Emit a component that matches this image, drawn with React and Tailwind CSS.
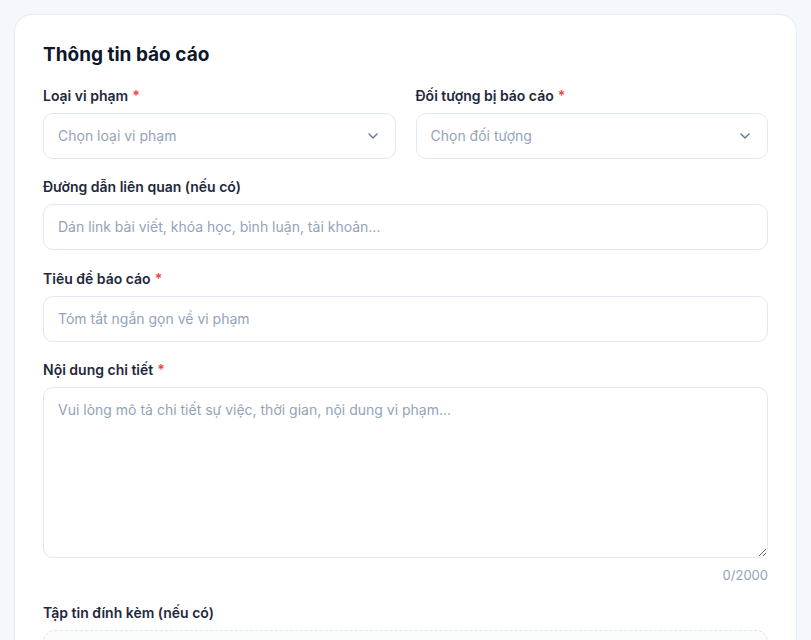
import { ChevronDown } from 'lucide-react';

const fieldBase =
  'block w-full rounded-[10px] border border-[#e2e8f0] bg-white px-3.5 py-3 text-sm leading-5 placeholder:text-[#94a3b8] focus:outline-none';

function Label({ children, required }) {
  return (
    <label className="mb-[7px] block text-sm font-semibold leading-5 text-[#1e293b]">
      {children}
      {required && <span className="ml-1 text-[#ef4444]">*</span>}
    </label>
  );
}

function SelectBox({ placeholder }) {
  return (
    <div className="relative">
      <select defaultValue="" className={fieldBase + ' h-[46px] appearance-none pr-10 text-[#94a3b8]'}>
        <option value="" disabled>
          {placeholder}
        </option>
      </select>
      <ChevronDown
        size={16}
        strokeWidth={2}
        className="pointer-events-none absolute right-[15px] top-1/2 -translate-y-1/2 text-[#64748b]"
      />
    </div>
  );
}

export default function App() {
  return (
    <div
      className="min-h-screen bg-[#f4f7fb] p-3.5"
      style={{ fontFamily: 'Inter, "Noto Sans", sans-serif' }}
    >
      <div className="rounded-[18px] border border-[#e5ecf3] bg-white px-7 pt-[26px] pb-10">
        <h2 className="mb-[17px] text-[19px] font-bold leading-7 text-[#0f172a]">Thông tin báo cáo</h2>

        <div className="space-y-[18px]">
          {/* Loại vi phạm + Đối tượng */}
          <div className="grid grid-cols-2 gap-5">
            <div>
              <Label required>Loại vi phạm</Label>
              <SelectBox placeholder="Chọn loại vi phạm" />
            </div>
            <div>
              <Label required>Đối tượng bị báo cáo</Label>
              <SelectBox placeholder="Chọn đối tượng" />
            </div>
          </div>

          {/* Đường dẫn */}
          <div>
            <Label>Đường dẫn liên quan (nếu có)</Label>
            <input
              type="text"
              className={fieldBase + ' text-slate-800'}
              placeholder="Dán link bài viết, khóa học, bình luận, tài khoản..."
            />
          </div>

          {/* Tiêu đề */}
          <div className="pt-px">
            <Label required>Tiêu đề báo cáo</Label>
            <input
              type="text"
              className={fieldBase + ' text-slate-800'}
              placeholder="Tóm tắt ngắn gọn về vi phạm"
            />
          </div>

          {/* Nội dung */}
          <div>
            <Label required>Nội dung chi tiết</Label>
            <textarea
              className={fieldBase + ' h-[171px] text-slate-800'}
              placeholder="Vui lòng mô tả chi tiết sự việc, thời gian, nội dung vi phạm..."
            />
            <div className="mt-2 text-right text-[13px] leading-[18px] text-[#94a3b8]">0/2000</div>
          </div>

          {/* Tập tin */}
          <div className="pt-px">
            <Label>Tập tin đính kèm (nếu có)</Label>
            <div className="h-[120px] rounded-[12px] border border-dashed border-[#dbe3ec] bg-[#fbfcfe]" />
          </div>
        </div>
      </div>
    </div>
  );
}
